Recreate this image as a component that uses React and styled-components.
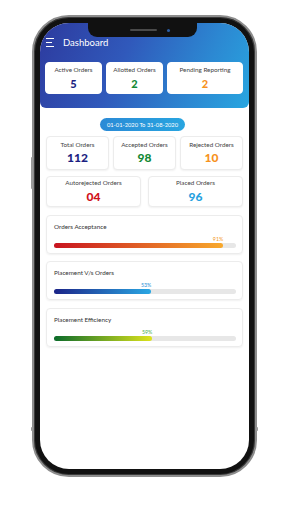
import React from 'react'
import styled, { createGlobalStyle } from 'styled-components'

const GlobalStyle = createGlobalStyle`
  html, body {
    margin: 0;
    padding: 0;
    background: #fff;
    font-family: Lato, "Open Sans", sans-serif;
  }
`

const Page = styled.div`
  width: 288px;
  height: 512px;
  padding: 15px 0 0 32px;
  box-sizing: border-box;
`

const Phone = styled.div`
  position: relative;
  width: 225px;
  height: 462px;
  box-sizing: border-box;
  padding: 6px;
  border-radius: 37px;
  background: #111;
  border: 2px solid #8d8d8d;
  box-shadow: inset 0 0 0 1px #3a3a3a;
`

const SideButton = styled.span`
  position: absolute;
  width: 2px;
  background: #9a9a9a;
  left: ${p => (p.right ? 'auto' : '-3px')};
  right: ${p => (p.right ? '-3px' : 'auto')};
  top: ${p => p.top}px;
  height: ${p => p.h}px;
  border-radius: 1px;
`

const Screen = styled.div`
  position: relative;
  height: 100%;
  border-radius: 29px;
  overflow: hidden;
  background: #fff;
`

const Notch = styled.div`
  position: absolute;
  top: 0;
  left: 48px;
  width: 109px;
  height: 14px;
  background: #111;
  border-radius: 0 0 9px 9px;
  display: flex;
  align-items: center;
  justify-content: center;
  gap: 10px;
  padding-left: 14px;
  box-sizing: border-box;
`

const Speaker = styled.span`
  width: 27px;
  height: 2px;
  border-radius: 1px;
  background: #4a4a4a;
`

const Camera = styled.span`
  width: 3px;
  height: 3px;
  border-radius: 50%;
  background: #2b5fa8;
`

const Header = styled.header`
  padding: 14px 6px 14px 5px;
  background: linear-gradient(115deg, #2d3a9e 0%, #3059bb 40%, #2c88d2 75%, #28a6e0 100%);
  border-radius: 0 0 6px 6px;
`

const TitleRow = styled.div`
  display: flex;
  align-items: center;
  gap: 9px;
  height: 11px;
  padding-left: 1px;
`

const Burger = styled.div`
  display: flex;
  flex-direction: column;
  gap: 2.5px;
  width: 8px;
`

const BurgerLine = styled.span`
  height: 1.2px;
  background: #fff;
  width: ${p => p.w}px;
`

const Title = styled.h1`
  margin: 0;
  font-size: 9.5px;
  font-weight: 400;
  color: #fff;
`

const TopRow = styled.div`
  display: grid;
  grid-template-columns: 57px 57px 1fr;
  gap: 4px;
  margin-top: 14px;
`

const Card = styled.div`
  background: #fff;
  border-radius: 4px;
  border: 1px solid ${p => (p.flat ? '#fff' : '#ececec')};
  box-shadow: ${p => (p.flat ? 'none' : '0 1px 2px rgba(0,0,0,0.06)')};
  height: ${p => p.h}px;
  box-sizing: border-box;
  display: flex;
  flex-direction: column;
  align-items: center;
  justify-content: center;
  gap: ${p => p.gap || 2}px;
`

const Label = styled.div`
  font-size: 6.3px;
  color: #444;
  line-height: 1;
  white-space: nowrap;
`

const Value = styled.div`
  font-size: ${p => p.size || 11}px;
  font-weight: 900;
  line-height: 1;
  color: ${p => p.color};
`

const Body = styled.main`
  padding: 10px 6px 0 6px;
  display: flex;
  flex-direction: column;
`

const DateRow = styled.div`
  display: flex;
  justify-content: center;
  padding-right: 4px;
`

const DatePill = styled.div`
  width: 85px;
  height: 13px;
  border-radius: 7px;
  background: linear-gradient(90deg, #2b8ad6, #28a5e0);
  color: #fff;
  font-size: 5.8px;
  display: flex;
  align-items: center;
  justify-content: center;
`

const Row = styled.div`
  display: grid;
  grid-template-columns: ${p => p.cols};
  gap: ${p => p.gap}px;
  margin-top: ${p => p.mt}px;
`

const ProgressCard = styled.div`
  margin-top: ${p => p.mt}px;
  height: ${p => p.h || 39}px;
  box-sizing: border-box;
  border: 1px solid #ececec;
  border-radius: 4px;
  box-shadow: 0 1px 2px rgba(0,0,0,0.06);
  padding: 8px 6px 0 7px;
`

const ProgressLabel = styled.div`
  font-size: 6.3px;
  color: #333;
  line-height: 1;
`

const Track = styled.div`
  margin-top: 13px;
  height: 5px;
  border-radius: 3px;
  background: #e7e7e7;
`

const Fill = styled.div`
  position: relative;
  height: 100%;
  border-radius: 3px;
  background: linear-gradient(90deg, ${p => p.from}, ${p => p.to});
`

const Percent = styled.span`
  position: absolute;
  right: 0;
  bottom: 6.5px;
  font-size: 5.3px;
  line-height: 1;
  color: ${p => p.color};
`

const topStats = [
  { label: 'Active Orders', value: '5', color: '#1c1f82' },
  { label: 'Allotted Orders', value: '2', color: '#138a36' },
  { label: 'Pending Reporting', value: '2', color: '#f7931e' },
]

const midStats = [
  { label: 'Total Orders', value: '112', color: '#1c1f82' },
  { label: 'Accepted Orders', value: '98', color: '#138a36' },
  { label: 'Rejected Orders', value: '10', color: '#f7931e' },
]

const lowStats = [
  { label: 'Autorejected Orders', value: '04', color: '#d0131b' },
  { label: 'Placed Orders', value: '96', color: '#27a2e0' },
]

const progress = [
  { label: 'Orders Acceptance', pct: '91%', width: 93, from: '#c8141f', to: '#f8a92c', color: '#f39a2a', mt: 8 },
  { label: 'Placement V/s Orders', pct: '53%', width: 53.5, from: '#1b2488', to: '#2aa7e3', color: '#2a8fd6', mt: 7 },
  { label: 'Placement Efficiency', pct: '59%', width: 54, from: '#0b6b2a', to: '#dde31c', color: '#4caf50', mt: 8 },
]

const App = () => {
  return (
    <Page>
      <GlobalStyle />
      <Phone>
        <SideButton top={140} h={32} />
        <SideButton top={410} h={4} />
        <SideButton right top={410} h={4} />
        <Screen>
          <Notch>
            <Speaker />
            <Camera />
          </Notch>
          <Header>
            <TitleRow>
              <Burger>
                <BurgerLine w={8} />
                <BurgerLine w={6} />
                <BurgerLine w={8} />
              </Burger>
              <Title>Dashboard</Title>
            </TitleRow>
            <TopRow>
              {topStats.map((s, i) => (
                <Card flat h={32} gap={4} key={i}>
                  <Label>{s.label}</Label>
                  <Value color={s.color} size={11}>{s.value}</Value>
                </Card>
              ))}
            </TopRow>
          </Header>
          <Body>
            <DateRow>
              <DatePill>01-01-2020 To 31-08-2020</DatePill>
            </DateRow>
            <Row cols="1fr 1fr 1fr" gap={4} mt={5}>
              {midStats.map((s, i) => (
                <Card h={34} gap={4} key={i}>
                  <Label>{s.label}</Label>
                  <Value color={s.color} size={12}>{s.value}</Value>
                </Card>
              ))}
            </Row>
            <Row cols="1fr 1fr" gap={7} mt={6}>
              {lowStats.map((s, i) => (
                <Card h={31} gap={5} key={i}>
                  <Label>{s.label}</Label>
                  <Value color={s.color} size={12}>{s.value}</Value>
                </Card>
              ))}
            </Row>
            {progress.map((p, i) => (
              <ProgressCard mt={p.mt} key={i}>
                <ProgressLabel>{p.label}</ProgressLabel>
                <Track>
                  <Fill from={p.from} to={p.to} style={{ width: p.width + '%' }}>
                    <Percent color={p.color}>{p.pct}</Percent>
                  </Fill>
                </Track>
              </ProgressCard>
            ))}
          </Body>
        </Screen>
      </Phone>
    </Page>
  )
}

export default App
